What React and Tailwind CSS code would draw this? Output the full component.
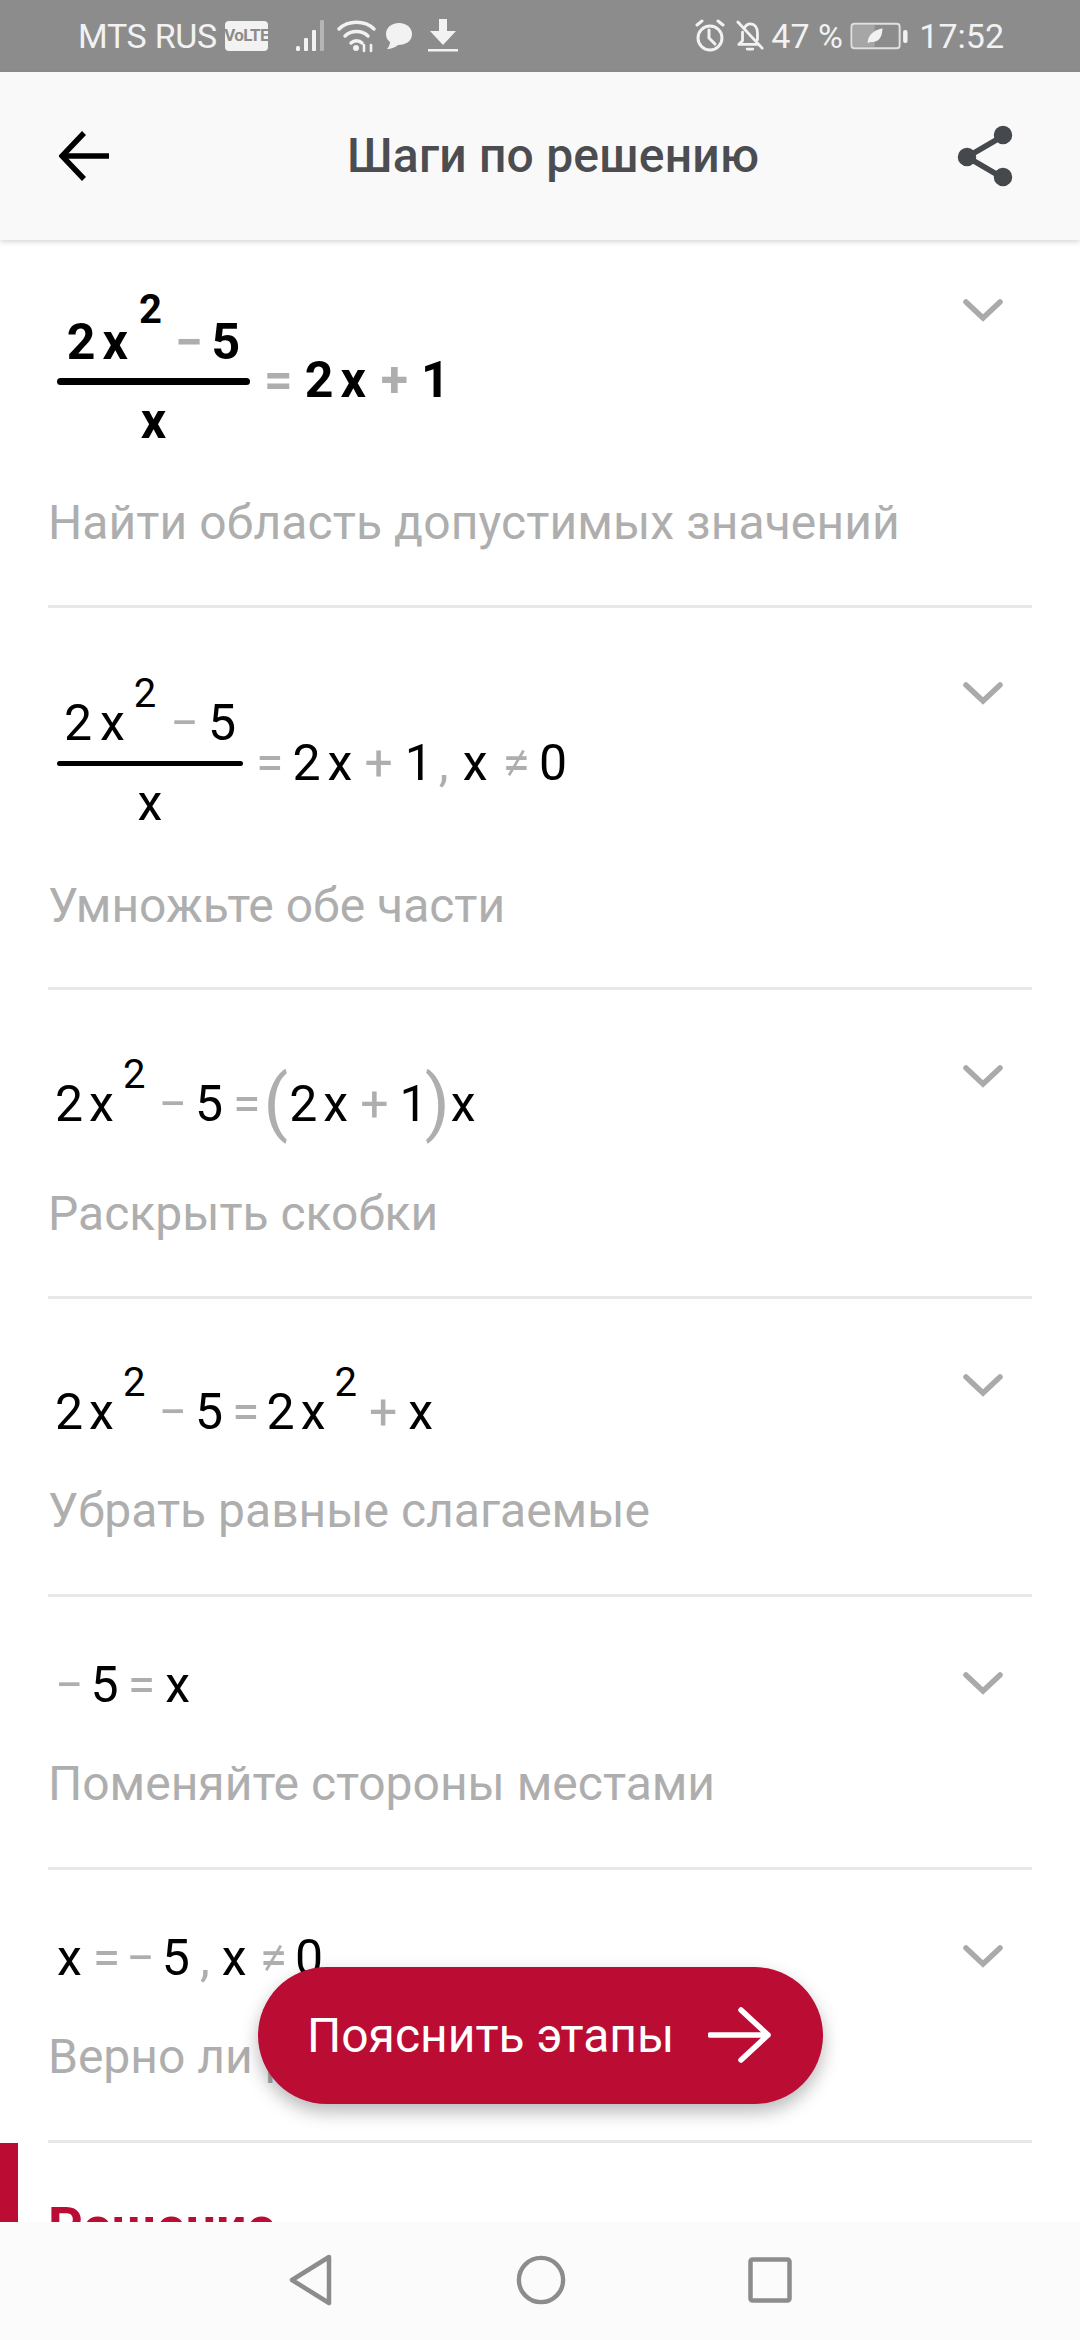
import React from "react";

const RED = "bg-[#bb0c33]";

function T({ g, m = "", children }) {
  return <span className={`${g ? "text-[#aeaeae]" : "text-black"} ${m}`}>{children}</span>;
}

function Sup({ m = "", children }) {
  return <span className={`text-[40px] leading-[0] align-[33px] text-black ${m}`}>{children}</span>;
}

function Line({ className = "", children }) {
  return <div className={`h-[60px] leading-[60px] whitespace-nowrap ${className}`}>{children}</div>;
}

function Chevron({ className = "" }) {
  return (
    <svg viewBox="0 0 42 26" className={`w-[42px] h-[26px] shrink-0 mr-[28px] ${className}`} fill="none" stroke="#aaaaaa" strokeWidth="5.5" strokeLinecap="round" strokeLinejoin="miter">
      <path d="M4 4 L21 20 L38 4" />
    </svg>
  );
}

function Label({ className = "", children }) {
  return <div className={`h-[60px] leading-[60px] text-[48px] text-[#aeaeae] whitespace-nowrap ${className}`}>{children}</div>;
}

function Row({ className = "", chevron, children }) {
  return (
    <div className={`mx-12 shrink-0 border-b-[3px] border-[#e8e8e8] flex justify-between items-start ${className}`}>
      <div className="flex flex-col">{children}</div>
      <Chevron className={chevron} />
    </div>
  );
}

function StatusLeft() {
  return (
    <div className="flex items-center">
      <span className="text-[34px] tracking-[-0.3px] text-[#f2f2f2] ml-[78px] w-[147px] whitespace-nowrap">MTS RUS</span>
      <div className="w-[43px] h-[30px] rounded-[4px] bg-[#f2f2f2] text-[#8c8c8c] text-[17px] font-bold flex items-center justify-center tracking-[-0.6px]">VoLTE</div>
      <svg viewBox="0 0 32 32" className="w-[32px] h-[32px] ml-[28px]" fill="#f2f2f2">
        <rect x="0" y="26" width="4" height="5" rx="1.5" />
        <rect x="8" y="18" width="4" height="13" rx="1" />
        <rect x="16" y="10" width="4" height="21" rx="1" />
        <rect x="24" y="0" width="4" height="31" rx="1" fill="#b5b5b5" />
      </svg>
      <svg viewBox="0 0 40 34" className="w-[40px] h-[34px] ml-[9px]" fill="none" stroke="#f2f2f2" strokeWidth="3.4" strokeLinecap="round">
        <path d="M2 10 C11 1 28 1 37 10" />
        <path d="M8 17 C14 11 25 11 31 17" />
        <path d="M14 24 C17 21 22 21 25 24" />
        <circle cx="19" cy="29" r="3" fill="#f2f2f2" stroke="none" />
        <path d="M27 32 L27 26 M34 26 L34 32" strokeWidth="2.6" />
      </svg>
      <svg viewBox="0 0 28 28" className="w-[28px] h-[28px] ml-[8px]" fill="#f2f2f2">
        <path d="M14 1 C22 1 27 6 27 12 C27 19 21 23 13 23 C11 25 6 27 2 27 C4 25 5 22 5 20 C2 18 1 15 1 12 C1 6 6 1 14 1 Z" />
      </svg>
      <svg viewBox="0 0 32 34" className="w-[32px] h-[34px] ml-[14px]" fill="#f2f2f2">
        <path d="M12 0 H20 V12 H29 L16 26 L3 12 H12 Z" />
        <rect x="1" y="30" width="30" height="2.5" />
      </svg>
    </div>
  );
}

function StatusRight() {
  return (
    <div className="flex items-center">
      <svg viewBox="0 0 32 34" className="w-[32px] h-[34px]" fill="none" stroke="#f2f2f2" strokeWidth="3" strokeLinecap="round">
        <circle cx="16" cy="19" r="12" />
        <path d="M15 11 V19 L21 25" />
        <path d="M3 6 L8 2 M29 6 L24 2" />
      </svg>
      <svg viewBox="0 0 30 34" className="w-[28px] h-[32px] ml-[10px]" fill="none" stroke="#f2f2f2" strokeWidth="3" strokeLinecap="round" strokeLinejoin="round">
        <path d="M9 8 C11 5 13 4 15 4 C20 4 23 8 23 14 V21" />
        <path d="M7 13 V22 L3 26 H23" />
        <path d="M2 2 L28 30" />
        <path d="M12 31 H18" />
      </svg>
      <span className="text-[34px] text-[#f2f2f2] ml-[7px] w-[79px] whitespace-nowrap">47 %</span>
      <svg viewBox="0 0 60 28" className="w-[59px] h-[28px]">
        <rect x="1.5" y="1.5" width="49" height="25" rx="3" fill="none" stroke="#e0e0e0" strokeWidth="2" />
        <rect x="3" y="3" width="22" height="22" fill="#a6a6a6" />
        <path d="M18 21 C18 13 24 8 33 6 C33 15 29 21 21 20 Z" fill="#f2f2f2" />
        <rect x="54" y="8" width="4.5" height="13" rx="2" fill="#f2f2f2" />
      </svg>
      <span className="text-[34px] text-[#f2f2f2] ml-[10px] mr-[76px]">17:52</span>
    </div>
  );
}

export default function App() {
  return (
    <div className="relative w-[1080px] h-[2340px] overflow-hidden bg-white flex flex-col font-['Roboto',sans-serif]">
      <div className="h-[72px] bg-[#8c8c8c] flex items-center justify-between shrink-0">
        <StatusLeft />
        <StatusRight />
      </div>

      <div className="relative z-10 h-[168px] bg-[#f9f9f9] shadow-[0_2px_5px_rgba(0,0,0,0.16)] flex items-center shrink-0">
        <svg viewBox="0 0 50 50" className="w-[50px] h-[50px] ml-[59px] shrink-0" fill="none" stroke="#000" strokeWidth="5.5">
          <path d="M50 25 H4" />
          <path d="M25 2 L3 25 L25 48" />
        </svg>
        <div className="ml-[238px] w-[410px] text-[48px] font-medium tracking-[0.2px] text-[#4b4d50] whitespace-nowrap">Шаги по решению</div>
        <svg viewBox="0 0 56 62" className="w-[56px] h-[62px] ml-[200px] shrink-0" fill="#45484c" stroke="#45484c" strokeWidth="5.5">
          <path d="M46 11 L10 32 L46 53" fill="none" />
          <circle cx="46" cy="10" r="6.5" />
          <circle cx="10" cy="32" r="6.5" />
          <circle cx="46" cy="52" r="6.5" />
        </svg>
      </div>

      <div className="flex-1 overflow-hidden flex flex-col text-[50px]">
        <Row className="h-[368px] pt-[70px] font-bold" chevron="-mt-[12px]">
          <div className="flex items-center ml-[9px]">
            <div className="flex flex-col items-center w-[193px]">
              <Line className="mb-2">
                <T>2</T><T m="ml-[7px]">x</T>
                <Sup m="font-bold ml-[11px] align-[36px]">2</Sup>
                <T g m="ml-[13px]">−</T><T m="ml-[9px]">5</T>
              </Line>
              <div className="w-full h-[7px] rounded-full bg-black" />
              <Line className="mt-[6px]"><T>x</T></Line>
            </div>
            <T g m="ml-[14px]">=</T><T m="ml-[12px]">2</T><T m="ml-[7px]">x</T><T g m="ml-[15px]">+</T><T m="ml-[13px]">1</T>
          </div>
          <Label className="mt-[42px] font-normal tracking-[0.1px]">Найти область допустимых значений</Label>
        </Row>

        <Row className="h-[382px] pt-[85px]" chevron="-mt-[12px]">
          <div className="flex items-center ml-[9px]">
            <div className="flex flex-col items-center w-[186px]">
              <Line className="mb-2">
                <T>2</T><T m="ml-[8px]">x</T>
                <Sup m="ml-[9px]">2</Sup>
                <T g m="ml-[14px]">−</T><T m="ml-[9px]">5</T>
              </Line>
              <div className="w-full h-[5px] rounded-full bg-black" />
              <Line className="mt-[7px]"><T>x</T></Line>
            </div>
            <T g m="ml-[13px]">=</T><T m="ml-[9px]">2</T><T m="ml-[7px]">x</T><T g m="ml-[12px]">+</T><T m="ml-[12px]">1</T>
            <T g m="ml-[6px]">,</T><T m="ml-[14px]">x</T><T g m="ml-[15px]">≠</T><T m="ml-[9px]">0</T>
          </div>
          <Label className="mt-[43px]">Умножьте обе части</Label>
        </Row>

        <Row className="h-[309px] pt-[84px]" chevron="-mt-[10px]">
          <Line className="ml-[7px]">
            <T>2</T><T m="ml-[6px]">x</T>
            <Sup m="ml-[9px]">2</Sup>
            <T g m="ml-[13px]">−</T><T m="ml-[8px]">5</T><T g m="ml-[10px]">=</T>
            <span className="text-[72px] leading-[0] text-[#aeaeae] ml-[3px] align-[-6px]">(</span>
            <T m="ml-[1px]">2</T><T m="ml-[6px]">x</T><T g m="ml-[12px]">+</T><T m="ml-[11px]">1</T>
            <span className="text-[72px] leading-[0] text-[#aeaeae] ml-[-3px] align-[-6px]">)</span>
            <T m="ml-[1px]">x</T>
          </Line>
          <Label className="mt-[50px]">Раскрыть скобки</Label>
        </Row>

        <Row className="h-[298px] pt-[83px]" chevron="-mt-[9px]">
          <Line className="ml-[7px]">
            <T>2</T><T m="ml-[6px]">x</T>
            <Sup m="ml-[9px]">2</Sup>
            <T g m="ml-[13px]">−</T><T m="ml-[8px]">5</T><T g m="ml-[9px]">=</T>
            <T m="ml-[7px]">2</T><T m="ml-[6px]">x</T>
            <Sup m="ml-[9px]">2</Sup>
            <T g m="ml-[12px]">+</T><T m="ml-[11px]">x</T>
          </Line>
          <Label className="mt-[39px]">Убрать равные слагаемые</Label>
        </Row>

        <Row className="h-[273px] pt-[58px]" chevron="mt-[16px]">
          <Line className="ml-[7px]">
            <T g>−</T><T m="ml-[7px]">5</T><T g m="ml-[9px]">=</T><T m="ml-[10px]">x</T>
          </Line>
          <Label className="mt-[39px]">Поменяйте стороны местами</Label>
        </Row>

        <Row className="h-[273px] pt-[58px]" chevron="mt-[16px]">
          <Line className="ml-[9px]">
            <T>x</T><T g m="ml-[11px]">=</T><T g m="ml-[6px]">−</T><T m="ml-[7px]">5</T>
            <T g m="ml-[10px]">,</T><T m="ml-[12px]">x</T><T g m="ml-[13px]">≠</T><T m="ml-[8px]">0</T>
          </Line>
          <Label className="mt-[39px]">Верно ли равенство</Label>
        </Row>

        <div className="flex h-[200px] shrink-0">
          <div className={`w-[18px] ${RED}`} />
          <div className="ml-[30px] mt-[54px] h-[60px] leading-[60px] text-[54px] font-bold text-[#bb0c33]">Решение</div>
        </div>
      </div>

      <div className="absolute z-20 left-[258px] top-[1967px] w-[565px] h-[137px] rounded-full bg-[#bb0c33] shadow-[0_8px_18px_rgba(0,0,0,0.28)] flex items-center text-white">
        <span className="ml-[49px] text-[48px] whitespace-nowrap">Пояснить этапы</span>
        <svg viewBox="0 0 64 56" className="absolute left-[450px] top-[40px] w-[64px] h-[56px]" fill="none" stroke="#fff" strokeWidth="5.5" strokeLinecap="round" strokeLinejoin="round">
          <path d="M2 28 H60 M33 3 L60 28 L33 53" />
        </svg>
      </div>

      <div className="relative z-10 h-[118px] bg-[#fbfbfb] shrink-0 flex items-center justify-center gap-[182px] pb-[3px]">
        <svg viewBox="0 0 46 52" className="w-[46px] h-[52px]" fill="none" stroke="#8c8c8c" strokeWidth="4.5" strokeLinejoin="round">
          <path d="M41 3 L4 26 L41 49 Z" />
        </svg>
        <svg viewBox="0 0 52 52" className="w-[50px] h-[50px]" fill="none" stroke="#8c8c8c" strokeWidth="4.5">
          <circle cx="26" cy="26" r="23" />
        </svg>
        <svg viewBox="0 0 44 46" className="w-[44px] h-[46px]" fill="none" stroke="#8c8c8c" strokeWidth="4.5" strokeLinejoin="round">
          <rect x="2.5" y="2.5" width="39" height="41" rx="2" />
        </svg>
      </div>
    </div>
  );
}
